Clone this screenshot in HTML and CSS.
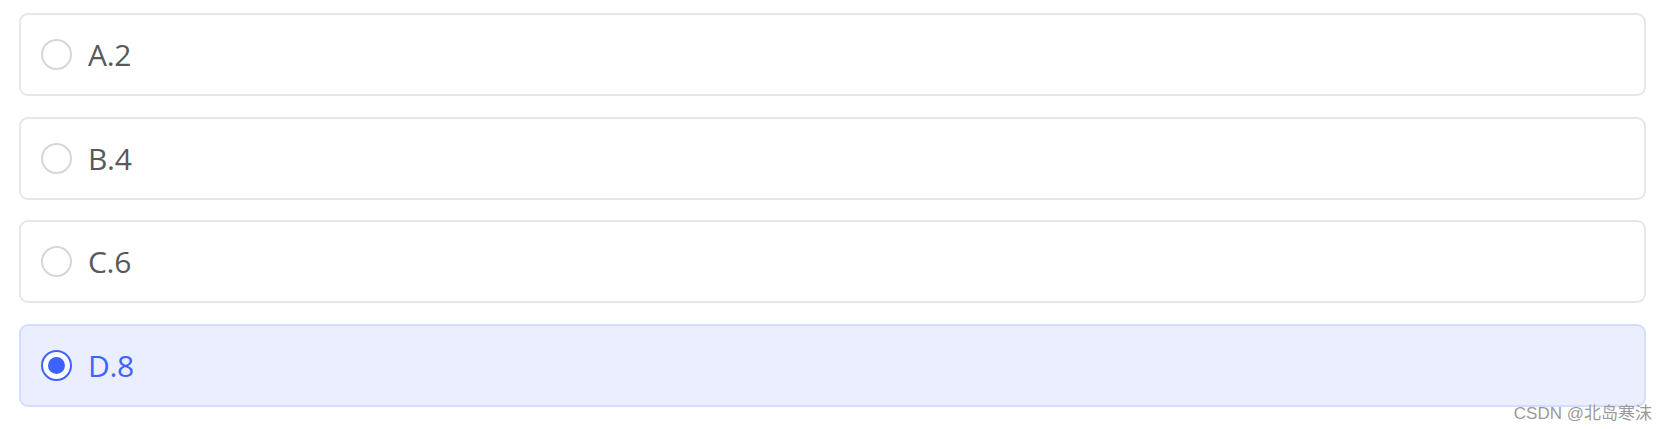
FILE: index.html
```html
<!DOCTYPE html>
<html lang="zh">
<head>
<meta charset="utf-8">
<link rel="stylesheet" href="styles.css">
</head>
<body>
<div class="page">
  <div class="options">
    <div class="option"><span class="radio"></span><span class="label">A.2</span></div>
    <div class="option"><span class="radio"></span><span class="label">B.4</span></div>
    <div class="option"><span class="radio"></span><span class="label">C.6</span></div>
    <div class="option selected"><span class="radio"></span><span class="label">D.8</span></div>
  </div>
  <div class="watermark">CSDN @北岛寒沫</div>
</div>
</body>
</html>
```
FILE: styles.css
```css
html, body {
  margin: 0;
  padding: 0;
  background: #ffffff;
}
.page {
  position: relative;
  width: 1668px;
  height: 429px;
  box-sizing: border-box;
  padding: 13px 22px 0 19px;
  font-family: "Open Sans", "Noto Sans", "Noto Sans CJK SC", sans-serif;
}
.options {
  display: flex;
  flex-direction: column;
  gap: 20.67px;
}
.option {
  height: 83px;
  box-sizing: border-box;
  border: 2px solid #e6e6eb;
  border-radius: 9px;
  background: #ffffff;
  display: flex;
  align-items: center;
  padding-left: 20px;
  gap: 16px;
}
.radio {
  width: 31px;
  height: 31px;
  box-sizing: border-box;
  border: 2px solid #d6d6d9;
  border-radius: 50%;
  background: #ffffff;
  display: flex;
  align-items: center;
  justify-content: center;
  flex: none;
}
.label {
  font-size: 30px;
  color: #595959;
  letter-spacing: -0.3px;
}
.option.selected {
  background: #ebeeff;
  border-color: #d5ddff;
}
.option.selected .radio {
  border-color: #3d63ff;
}
.option.selected .radio::after {
  content: "";
  width: 17px;
  height: 17px;
  border-radius: 50%;
  background: #3d63ff;
}
.option.selected .label {
  color: #3d63ff;
}
.watermark {
  position: absolute;
  right: 16px;
  bottom: 5px;
  font-family: "Liberation Sans", "Noto Sans CJK SC", sans-serif;
  font-size: 17px;
  color: #9a9a9a;
}
```
